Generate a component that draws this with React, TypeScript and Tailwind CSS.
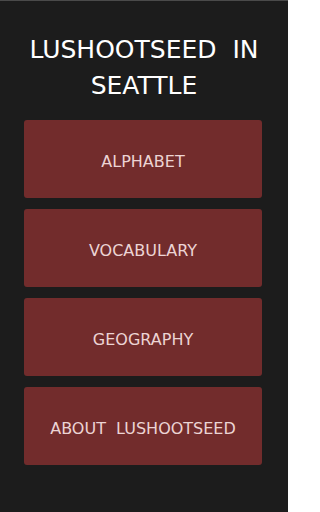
const items = ['ALPHABET', 'VOCABULARY', 'GEOGRAPHY', 'ABOUT  LUSHOOTSEED'];

export default function App() {
  return (
    <div
      className="w-[288px] h-[512px] bg-[#1c1c1c] border-t border-[#4a4a4a] flex flex-col overflow-hidden"
      style={{ fontFamily: '"DejaVu Sans", Verdana, sans-serif' }}
    >
      <h1 className="mt-[31px] text-center text-white text-[25px] leading-[36px] whitespace-pre">
        {'LUSHOOTSEED  IN\nSEATTLE'}
      </h1>
      <div className="mt-[16px] ml-[24px] w-[238px] flex flex-col gap-[11px]">
        {items.map(label => (
          <button
            key={label}
            className="h-[78px] pt-[5px] rounded-[3px] bg-[#722c2c] text-[#ecd4d4] text-[16px] whitespace-pre flex items-center justify-center"
          >
            {label}
          </button>
        ))}
      </div>
    </div>
  );
}
